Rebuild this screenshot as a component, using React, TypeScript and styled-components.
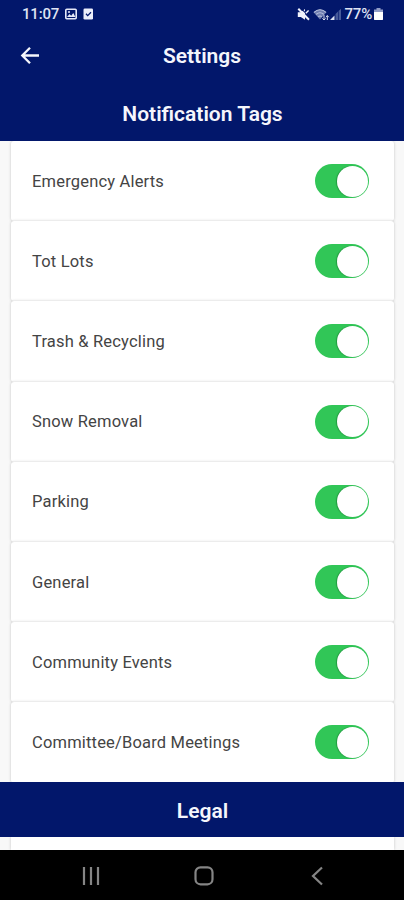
import React from "react";
import styled, { createGlobalStyle } from "styled-components";

const GlobalStyle = createGlobalStyle`
  * { box-sizing: border-box; }
  body { margin: 0; background: #f8f8f8; font-family: Roboto, sans-serif; }
`;

const Screen = styled.div`
  width: 404px;
  height: 900px;
  display: flex;
  flex-direction: column;
  overflow: hidden;
  background: #f8f8f8;
`;

const StatusBar = styled.div`
  height: 28px;
  flex: none;
  display: flex;
  align-items: center;
  justify-content: space-between;
  padding: 0 21px 0 22px;
  background: #02176b;
  color: #dfe3f3;
`;

const StatusGroup = styled.div`
  display: flex;
  align-items: center;
`;

const StatusText = styled.span<{ $gap?: number }>`
  margin-left: ${(p) => p.$gap ?? 0}px;
  font-size: 15px;
  font-weight: 500;
  line-height: 28px;
  letter-spacing: -0.2px;
`;

const StatusIcon = styled.svg<{ $gap: number }>`
  display: block;
  margin-left: ${(p) => p.$gap}px;
`;

const TitleBar = styled.header`
  height: 56px;
  flex: none;
  display: grid;
  grid-template-columns: 60px 1fr 60px;
  align-items: center;
  background: #02176b;
`;

const BackButton = styled.button`
  border: 0;
  padding: 0 0 1px 20px;
  background: none;
  display: flex;
`;

const Title = styled.h1`
  margin: 0;
  color: #f5f6fc;
  text-align: center;
  font-size: 21px;
  line-height: 56px;
  font-weight: 600;
`;

const SectionBar = styled.h2<{ $height: number }>`
  margin: 0;
  flex: none;
  height: ${(p) => p.$height}px;
  display: flex;
  align-items: center;
  justify-content: center;
  padding: 3px 0 0 1px;
  background: #02176b;
  color: #f5f6fc;
  font-size: 21px;
  font-weight: 600;
  position: relative;
`;

const List = styled.ul`
  list-style: none;
  margin: 0;
  padding: 0 10px 0 11px;
  flex: none;
  height: 641px;
`;

const Row = styled.li`
  height: 80.2px;
  display: flex;
  align-items: center;
  justify-content: space-between;
  padding: 0 25px 0 21px;
  background: #fff;
  border-radius: 3px;
  box-shadow: 0 0 3px rgba(0, 0, 0, 0.22);
`;

const Label = styled.span`
  color: #444;
  font-size: 16.5px;
  letter-spacing: 0.18px;
`;

const Switch = styled.button`
  width: 54px;
  height: 34px;
  border: 0;
  border-radius: 17px;
  padding: 1px;
  background: #31c657;
  display: flex;
  align-items: center;
  justify-content: flex-end;
`;

const Thumb = styled.span`
  width: 31px;
  height: 31px;
  border-radius: 50%;
  background: #fff;
  box-shadow: -1px 0 1px rgba(0, 70, 20, 0.35);
`;

const NextCard = styled.div`
  flex: none;
  height: 13px;
  margin: 0 10px 0 11px;
  background: #fff;
  box-shadow: 0 0 3px rgba(0, 0, 0, 0.2);
`;

const NavBar = styled.nav`
  flex: 1;
  background: #000;
  display: flex;
  align-items: center;
  justify-content: space-between;
  padding: 1px 77px 0 79px;
  position: relative;
`;

const NavButton = styled.button`
  border: 0;
  background: none;
  padding: 0;
  display: flex;
`;

const tags = [
  "Emergency Alerts",
  "Tot Lots",
  "Trash & Recycling",
  "Snow Removal",
  "Parking",
  "General",
  "Community Events",
  "Committee/Board Meetings",
];

function StatusBarContent() {
  return (
    <StatusBar>
      <StatusGroup>
        <StatusText>11:07</StatusText>
        <StatusIcon $gap={6} width="12" height="12" viewBox="0 0 12 12">
          <rect x="0.8" y="1.3" width="10.4" height="9.4" rx="1" fill="none" stroke="#e6e9f8" strokeWidth="1.6" />
          <path d="M2 9 4.5 6l1.7 1.7L8.3 5 10.4 9z" fill="#e6e9f8" />
          <circle cx="4" cy="4" r="1" fill="#e6e9f8" />
        </StatusIcon>
        <StatusIcon $gap={6} width="11" height="12" viewBox="0 0 11 12">
          <rect x="0.5" y="0.5" width="9.5" height="11" rx="1.3" fill="#eceefb" />
          <path d="m3 5.8 1.7 1.8L8 4.2" fill="none" stroke="#02176b" strokeWidth="1.3" />
        </StatusIcon>
      </StatusGroup>
      <StatusGroup>
        <StatusIcon $gap={0} width="13" height="13" viewBox="0 0 13 13">
          <path d="M.8 4.2h3L8 1v10.8L3.8 9h-3z" fill="#f0f2fb" />
          <path d="m3.8 .2 8.6 8.6" stroke="#02176b" strokeWidth="1.2" />
          <path d="m1.3 .8 10.7 10.9" stroke="#f0f2fb" strokeWidth="2" />
          <path d="m8.8 5.2 2.8-2.8" fill="none" stroke="#f0f2fb" strokeWidth="1.4" />
        </StatusIcon>
        <StatusIcon $gap={3} width="17" height="13" viewBox="0 0 17 13">
          <path d="M.5 4.2Q7 -1.7 13.5 4.2L7 11.5z" fill="#6d7caf" />
          <path d="M1 4.3Q7-.9 13 4.3M3.2 6.4Q7 3.2 10.8 6.4M5.2 8.7Q7 7.2 8.8 8.7" fill="none" stroke="#bac3df" strokeWidth="1.1" />
          <path d="M11 7v5M9.4 10.4 11 12l1.6-1.6M14.3 12V7.5M12.8 9.2l1.5-1.6 1.5 1.6" fill="none" stroke="#d7dced" strokeWidth="1" />
        </StatusIcon>
        <StatusIcon $gap={0} width="12" height="13" viewBox="0 0 12 13">
          <path d="M0 12 4.5 7.5V12z" fill="#dce1f1" />
          <path d="M5.5 12V6L8 3.5V12zM8.6 12V3L11 .8V12z" fill="#465a99" />
        </StatusIcon>
        <StatusText $gap={3}>77%</StatusText>
        <StatusIcon $gap={2} width="9" height="12" viewBox="0 0 9 12">
          <path d="M2.5 0h4v1.5H9V12H0V1.5h2.5z" fill="#929dc7" />
          <path d="M0 4h9v7a1 1 0 0 1-1 1H1a1 1 0 0 1-1-1z" fill="#fff" />
        </StatusIcon>
      </StatusGroup>
    </StatusBar>
  );
}

export default function App() {
  return (
    <>
      <GlobalStyle />
      <Screen>
        <StatusBarContent />
        <TitleBar>
          <BackButton aria-label="Back">
            <svg width="20" height="20" viewBox="0 0 20 20" fill="none" stroke="#f5f6fc" strokeWidth="2.3">
              <path d="M19 9.5H3M10 1.7 2.3 9.5l7.7 7.8" />
            </svg>
          </BackButton>
          <Title>Settings</Title>
        </TitleBar>
        <SectionBar $height={57}>Notification Tags</SectionBar>
        <List>
          {tags.map((tag) => (
            <Row key={tag}>
              <Label>{tag}</Label>
              <Switch role="switch" aria-checked="true" aria-label={tag}>
                <Thumb />
              </Switch>
            </Row>
          ))}
        </List>
        <SectionBar $height={55}>Legal</SectionBar>
        <NextCard />
        <NavBar>
          <NavButton aria-label="Recent apps">
            <svg width="24" height="20" viewBox="0 0 24 20" stroke="#858585" strokeWidth="2.2">
              <path d="M5 1v18M12 1v18M19 1v18" />
            </svg>
          </NavButton>
          <NavButton aria-label="Home">
            <svg width="22" height="20" viewBox="0 0 22 20" fill="none" stroke="#858585" strokeWidth="2.2">
              <rect x="1.5" y="1.3" width="17" height="17" rx="5" />
            </svg>
          </NavButton>
          <NavButton aria-label="Back">
            <svg width="20" height="20" viewBox="0 0 20 20" fill="none" stroke="#858585" strokeWidth="2.2">
              <path d="M15 1.5 6 10l9 8.5" />
            </svg>
          </NavButton>
        </NavBar>
      </Screen>
    </>
  );
}
